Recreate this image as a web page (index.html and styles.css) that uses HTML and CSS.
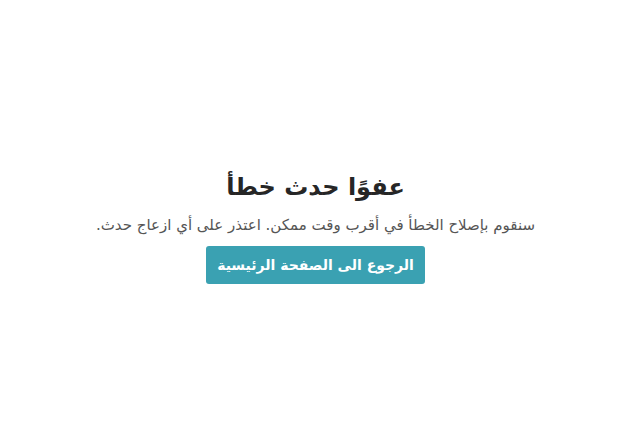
FILE: index.html
```html
<!DOCTYPE html>
<html lang="ar" dir="rtl">
<head>
<meta charset="utf-8">
<title>خطأ</title>
<link rel="stylesheet" href="styles.css">
</head>
<body>
<main class="page">
  <section class="error">
    <h1 class="error-title">عفوًا حدث خطأ</h1>
    <p class="error-text">سنقوم بإصلاح الخطأ في أقرب وقت ممكن. اعتذر على أي ازعاج حدث.</p>
    <a class="error-btn" href="#">الرجوع الى الصفحة الرئيسية</a>
  </section>
</main>
</body>
</html>
```
FILE: styles.css
```css
html, body {
  margin: 0;
  padding: 0;
  background: #ffffff;
}
body {
  font-family: "DejaVu Sans", "Noto Sans", sans-serif;
  color: #333333;
}
.page {
  width: 631px;
  height: 430px;
  display: flex;
  justify-content: center;
}
.error {
  display: flex;
  flex-direction: column;
  align-items: center;
  padding-top: 170px;
}
.error-title {
  margin: 0;
  font-size: 24px;
  font-weight: bold;
  line-height: 35px;
  color: #262626;
}
.error-text {
  margin: 7px 0 0;
  font-size: 15px;
  line-height: 26px;
  color: #555555;
}
.error-btn {
  margin-top: 8px;
  width: 219px;
  height: 38px;
  box-sizing: border-box;
  display: flex;
  align-items: center;
  justify-content: center;
  background: #3aa1b2;
  color: #ffffff;
  font-size: 14px;
  font-weight: bold;
  border-radius: 3px;
  text-decoration: none;
}
```
